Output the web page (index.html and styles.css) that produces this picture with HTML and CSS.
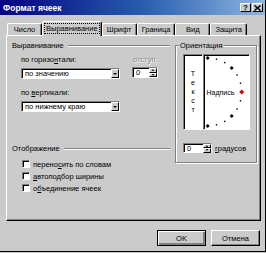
FILE: index.html
```html
<!DOCTYPE html>
<html lang="ru">
<head>
<meta charset="utf-8">
<title>Формат ячеек</title>
<link rel="stylesheet" href="styles.css">
</head>
<body>
<div class="dialog">
  <div class="titlebar">
    <span class="title">Формат ячеек</span>
    <div class="tb-buttons">
      <span class="tb-btn">?</span>
      <span class="tb-btn"><svg width="7" height="6" viewBox="0 0 7 6"><path d="M0.5 0.5 L6.5 5.5 M6.5 0.5 L0.5 5.5" stroke="#000" stroke-width="1.4"/></svg></span>
    </div>
  </div>
  <div class="tabs">
    <span class="tab">Число</span>
    <span class="tab active"><span class="focus">Выравнивание</span></span>
    <span class="tab">Шрифт</span>
    <span class="tab">Граница</span>
    <span class="tab">Вид</span>
    <span class="tab">Защита</span>
  </div>
  <div class="panel">
    <div class="left">
      <div class="group-head"><span>Выравнивание</span><i class="etch"></i></div>
      <div class="align">
        <div class="row labels">
          <span class="lbl wide">по горизо<u>н</u>тали:</span>
          <span class="lbl disabled">отступ:</span>
        </div>
        <div class="row controls">
          <div class="combo wide"><span>по значению</span><span class="drop"><i class="arrow-dn"></i></span></div>
          <div class="spin indent"><span>0</span><span class="spin-btns"><span class="sb"><i class="arrow-up sm"></i></span><span class="sb"><i class="arrow-dn sm"></i></span></span></div>
        </div>
        <div class="row labels second">
          <span class="lbl">по <u>в</u>ертикали:</span>
        </div>
        <div class="row controls">
          <div class="combo wide"><span>по нижнему краю</span><span class="drop"><i class="arrow-dn"></i></span></div>
        </div>
      </div>
      <div class="group-head display"><span>Отображение</span><i class="etch"></i></div>
      <div class="checks">
        <div class="check"><span class="box"></span><span>перено<u>с</u>ить по словам</span></div>
        <div class="check"><span class="box"></span><span><u>а</u>втоподбор ширины</span></div>
        <div class="check"><span class="box"></span><span>о<u>б</u>ъединение ячеек</span></div>
      </div>
    </div>
    <fieldset class="orient">
      <legend>Ориентация</legend>
      <div class="orient-boxes">
        <div class="vtext"><span>Т</span><span>е</span><span>к</span><span>с</span><span>т</span></div>
        <div class="dial">
          <svg width="45" height="74" viewBox="0 0 45 74">
            <g fill="#000">
              <polygon points="3.7,1 5.7,3 3.7,5 1.7,3"/>
              <polygon points="27.7,11 29.7,13 27.7,15 25.7,13"/>
              <polygon points="27.7,59 29.7,61 27.7,63 25.7,61"/>
              <polygon points="3.7,69 5.7,71 3.7,73 1.7,71"/>
              <rect x="11.8" y="3.5" width="1.4" height="1.4"/>
              <rect x="20" y="6.9" width="1.4" height="1.4"/>
              <rect x="32.4" y="19.3" width="1.4" height="1.4"/>
              <rect x="35.8" y="27.5" width="1.4" height="1.4"/>
              <rect x="35.8" y="45.1" width="1.4" height="1.4"/>
              <rect x="32.4" y="53.3" width="1.4" height="1.4"/>
              <rect x="20" y="65.7" width="1.4" height="1.4"/>
              <rect x="11.8" y="69.1" width="1.4" height="1.4"/>
            </g>
            <text x="2.5" y="39.5" font-family="Liberation Sans, Arial, sans-serif" font-size="7" fill="#000">Надпись</text>
            <polygon points="37.7,34.5 40.2,37 37.7,39.5 35.2,37" fill="#e00000"/>
          </svg>
        </div>
      </div>
      <div class="deg-row">
        <div class="spin deg"><span>0</span><span class="spin-btns"><span class="sb"><i class="arrow-up sm"></i></span><span class="sb"><i class="arrow-dn sm"></i></span></span></div>
        <span><u>г</u>радусов</span>
      </div>
    </fieldset>
  </div>
  <div class="buttons">
    <button class="btn default">OK</button>
    <button class="btn">Отмена</button>
  </div>
</div>
</body>
</html>
```
FILE: styles.css
```css
* { box-sizing: border-box; }
html, body { margin: 0; padding: 0; }
body {
  width: 266px;
  height: 253px;
  background: #cbcbcb;
  font-family: "Liberation Sans", Arial, sans-serif;
  font-size: 7.5px;
  color: #000;
  overflow: hidden;
}
u { text-decoration: underline; }

.dialog {
  width: 266px;
  height: 252px;
  background: #cbcbcb;
  border-right: 1px solid #000;
  border-bottom: 1px solid #000;
  display: flex;
  flex-direction: column;
}

.titlebar {
  height: 15px;
  background: linear-gradient(90deg, #000080 0%, #2a5fb0 55%, #8fb6e0 100%);
  display: flex;
  align-items: center;
  justify-content: space-between;
  padding: 0 2px 0 3px;
}
.title { color: #fff; font-weight: bold; font-size: 8.5px; }
.tb-buttons { display: flex; gap: 1px; }
.tb-btn {
  width: 11px;
  height: 9px;
  background: #cbcbcb;
  border: 1px solid;
  border-color: #fff #000 #000 #fff;
  display: flex;
  align-items: center;
  justify-content: center;
  font-weight: bold;
  font-size: 8px;
  line-height: 1;
}

.tabs {
  margin-top: 6px;
  padding-left: 7px;
  height: 14px;
  display: flex;
  align-items: flex-end;
}
.tab {
  height: 12px;
  min-width: 35px;
  padding: 0 4px;
  line-height: 11px;
  text-align: center;
  border-top: 1px solid #fff;
  border-left: 1px solid #fff;
  border-right: 1px solid #000;
  border-radius: 2px 2px 0 0;
  box-shadow: inset -1px 0 #808080;
  background: #cbcbcb;
}
.tab.active {
  height: 15px;
  margin-bottom: -1px;
  position: relative;
  z-index: 1;
  padding: 2px 2px 0;
  line-height: 9px;
}
.focus {
  display: inline-block;
  outline: 1px dotted #000;
  padding: 0 1px;
}

.panel {
  margin-left: 6px;
  width: 255px;
  height: 186px;
  border: 1px solid;
  border-color: #fff #000 #000 #fff;
  box-shadow: inset -1px -1px #808080;
  display: flex;
  gap: 5px;
  padding: 5px 0 0 5px;
}

.left { width: 158px; display: flex; flex-direction: column; }
.group-head {
  height: 9px;
  line-height: 9px;
  display: flex;
  align-items: center;
}
.etch {
  flex: 1;
  height: 2px;
  margin-left: 4px;
  border-top: 1px solid #808080;
  border-bottom: 1px solid #fff;
}

.align { padding-left: 9px; margin-top: 5px; }
.row { display: flex; align-items: flex-start; }
.labels { height: 10px; line-height: 10px; }
.labels.second { margin-top: 9px; }
.controls { margin-top: 3px; }
.lbl.wide { width: 112px; }
.disabled { color: #8a8a8a; text-shadow: 1px 1px #fff; }

.combo {
  height: 11px;
  background: #fff;
  border: 1px solid;
  border-color: #808080 #fff #fff #808080;
  box-shadow: inset 1px 1px #000;
  display: flex;
  align-items: center;
  justify-content: space-between;
  padding-left: 3px;
  line-height: 9px;
}
.combo.wide { width: 99px; margin-right: 12px; }
.drop {
  width: 8px;
  height: 9px;
  background: #cbcbcb;
  border: 1px solid;
  border-color: #fff #000 #000 #fff;
  display: flex;
  align-items: center;
  justify-content: center;
}
.arrow-dn {
  width: 0; height: 0;
  border-left: 2px solid transparent;
  border-right: 2px solid transparent;
  border-top: 2px solid #000;
}
.arrow-up {
  width: 0; height: 0;
  border-left: 2px solid transparent;
  border-right: 2px solid transparent;
  border-bottom: 2px solid #000;
}
.arrow-up.sm, .arrow-dn.sm { border-left-width: 1.5px; border-right-width: 1.5px; }

.spin {
  height: 11px;
  background: #fff;
  border: 1px solid;
  border-color: #808080 #fff #fff #808080;
  box-shadow: inset 1px 1px #000;
  display: flex;
  align-items: center;
  justify-content: space-between;
  padding-left: 3px;
  line-height: 9px;
}
.spin.indent { width: 26px; margin-top: -1px; }
.spin-btns { width: 8px; height: 9px; display: flex; flex-direction: column; }
.sb {
  flex: 1;
  background: #cbcbcb;
  border: 1px solid;
  border-color: #fff #000 #000 #fff;
  display: flex;
  align-items: center;
  justify-content: center;
  border-top-width: 0.5px;
  border-bottom-width: 0.5px;
}

.group-head.display { margin-top: 32px; }
.checks { margin-top: 5px; padding-left: 10px; }
.check { height: 12px; display: flex; align-items: center; gap: 3px; }
.box {
  width: 8px;
  height: 8px;
  background: #fff;
  border: 1px solid;
  border-color: #808080 #fff #fff #808080;
  box-shadow: inset 1px 1px #000;
}

.orient {
  margin: 0;
  padding: 0;
  width: 82px;
  height: 122px;
  border: 1px solid #808080;
  box-shadow: inset 1px 1px #fff, 1px 1px #fff;
  min-width: 0;
}
.orient legend {
  margin-left: 3px;
  padding: 0 1px;
  line-height: 9px;
  background: #cbcbcb;
}
.orient-boxes { display: flex; margin: 4px 0 0 7px; }
.vtext, .dial {
  height: 76px;
  background: #fff;
  border: 1px solid;
  border-color: #808080 #fff #fff #808080;
  box-shadow: inset 1px 1px #000;
}
.vtext {
  width: 20px;
  display: flex;
  flex-direction: column;
  align-items: center;
  justify-content: center;
  line-height: 9px;
  font-size: 7px;
  padding-bottom: 2px;
}
.dial { width: 47px; }
.dial svg { display: block; }

.deg-row { display: flex; align-items: center; gap: 3px; margin: 13px 0 0 7px; }
.spin.deg { width: 29px; height: 10px; }

.buttons {
  margin-top: 9px;
  display: flex;
  justify-content: flex-end;
  gap: 5px;
  padding-right: 5px;
}
.btn {
  width: 49px;
  height: 16px;
  margin: 0;
  padding: 0;
  font-family: "Liberation Sans", Arial, sans-serif;
  font-size: 7.5px;
  color: #000;
  background: #cbcbcb;
  border: 1px solid;
  border-color: #fff #000 #000 #fff;
  box-shadow: inset -1px -1px #808080;
}
.btn.default {
  border: 1px solid #000;
  box-shadow: inset 1px 1px #fff, inset -2px -2px #808080;
}
```
